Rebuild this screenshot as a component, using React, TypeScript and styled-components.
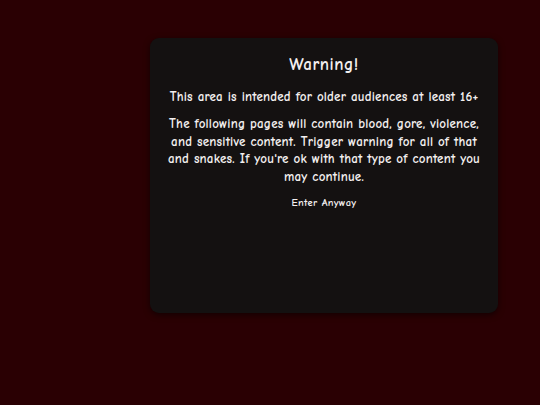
import styled, { createGlobalStyle } from 'styled-components';

const GlobalStyle = createGlobalStyle`
  html, body {
    margin: 0;
    padding: 0;
    background: #2a0003;
  }

  body {
    font-family: 'Comic Neue', 'Open Sans', 'DejaVu Sans', sans-serif;
    color: #f3efef;
  }
`;

const Page = styled.main`
  min-height: 405px;
  box-sizing: border-box;
  padding: 38px 0 0 150px;
`;

const Card = styled.section`
  width: 348px;
  height: 275px;
  box-sizing: border-box;
  padding: 16px 12px;
  background: #141111;
  border-radius: 9px;
  box-shadow: 0 2px 6px rgba(0, 0, 0, 0.55);
  text-align: center;
`;

const Title = styled.h1`
  margin: 0;
  font-size: 17px;
  line-height: 22px;
  font-weight: 700;
  letter-spacing: 0.5px;
`;

const Text = styled.p`
  margin: 12px 0 0;
  font-size: 13px;
  line-height: 17.4px;
  font-weight: 600;
  letter-spacing: 0.2px;

  & + & {
    margin-top: 10px;
  }
`;

const EnterLink = styled.a`
  display: inline-block;
  margin-top: 12px;
  font-size: 10.5px;
  font-weight: 600;
  letter-spacing: 0.3px;
  color: inherit;
  text-decoration: none;
  cursor: pointer;
`;

export default function App() {
  return (
    <>
      <GlobalStyle />
      <Page>
        <Card>
          <Title>Warning!</Title>
          <Text>This area is intended for older audiences at least 16+</Text>
          <Text>
            The following pages will contain blood, gore, violence, and sensitive content. Trigger
            warning for all of that and snakes. If you're ok with that type of content you may
            continue.
          </Text>
          <EnterLink href="#">Enter Anyway</EnterLink>
        </Card>
      </Page>
    </>
  );
}
